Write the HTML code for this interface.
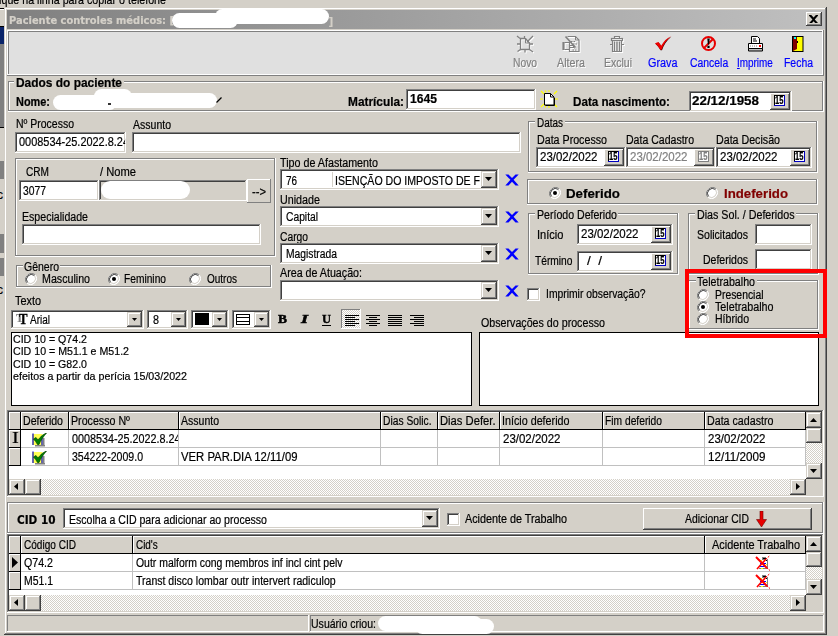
<!DOCTYPE html>
<html lang="pt-BR">
<head>
<meta charset="utf-8">
<title>Paciente controles médicos</title>
<style>
html,body{margin:0;padding:0;}
body{width:838px;height:636px;overflow:hidden;background:#d4d0c8;font-family:"Liberation Sans",sans-serif;font-size:12px;color:#000;}
#root{position:relative;width:838px;height:636px;overflow:hidden;background:#d4d0c8;}
#root div,#root span.t,#root svg{position:absolute;box-sizing:border-box;}
span.t{white-space:pre;transform-origin:0 0;display:block;-webkit-text-stroke:0.2px;}
.sunk{background:#fff;box-shadow:inset -1px -1px 0 #fff,inset 1px 1px 0 #808080,inset -2px -2px 0 #d4d0c8,inset 2px 2px 0 #404040;}
.sunkg{background:#d4d0c8;box-shadow:inset -1px -1px 0 #fff,inset 1px 1px 0 #808080,inset -2px -2px 0 #d4d0c8,inset 2px 2px 0 #404040;}
.btn{background:#d4d0c8;box-shadow:inset -1px -1px 0 #404040,inset 1px 1px 0 #fff,inset -2px -2px 0 #808080,inset 2px 2px 0 #d4d0c8;}
.sbtn{background:#d4d0c8;box-shadow:inset -1px -1px 0 #404040,inset 1px 1px 0 #d4d0c8,inset -2px -2px 0 #808080,inset 2px 2px 0 #fff;}
.frame{background:#d4d0c8;box-shadow:inset -1px -1px 0 #404040,inset 1px 1px 0 #d4d0c8,inset -2px -2px 0 #808080,inset 2px 2px 0 #fff;}
.etch{box-shadow:inset -1px -1px 0 #fff,inset 1px 1px 0 #808080,inset -2px -2px 0 #808080,inset 2px 2px 0 #fff;}
.low1{box-shadow:inset -1px -1px 0 #fff,inset 1px 1px 0 #808080;}
.rai1{box-shadow:inset -1px -1px 0 #808080,inset 1px 1px 0 #fff;}
.track{background:repeating-conic-gradient(#fff 0% 25%,#d4d0c8 0% 50%) 0 0/2px 2px;}
.hd{background:#d4d0c8;box-shadow:inset -1px -1px 0 #000,inset 1px 1px 0 #fff;}
.blob{background:#fff;border-radius:8px;}

</style>
</head>
<body>
<div id="root">
<span id="t0" class="t" style="left:-11.00px;top:-7.3px;font-size:12px;line-height:14px;transform:scaleX(0.8903);">Clique na linha para copiar o telefone</span>
<div class="" style="left:0px;top:8px;width:4px;height:1px;background:#000;"></div>
<div class="" style="left:0px;top:9px;width:4px;height:1px;background:#fff;"></div>
<div class="" style="left:0px;top:26px;width:4px;height:1px;background:#000;"></div>
<div class="" style="left:0px;top:27px;width:4px;height:17px;background:#0a246a;"></div>
<div class="" style="left:0px;top:44px;width:4px;height:83px;background:#808080;"></div>
<div class="" style="left:0px;top:127px;width:4px;height:1px;background:#000;"></div>
<div class="" style="left:0px;top:161px;width:4px;height:18px;background:#808080;"></div>
<div class="" style="left:0px;top:234px;width:4px;height:19px;background:#808080;"></div>
<div class="" style="left:0px;top:258px;width:4px;height:18px;background:#808080;"></div>
<span id="t1" class="t" style="left:-3.00px;top:188px;font-size:12px;line-height:14px;">c</span>
<span id="t2" class="t" style="left:-3.00px;top:283px;font-size:12px;line-height:14px;">c</span>
<div class="frame" style="left:4px;top:7px;width:823px;height:628px;"></div>
<div class="" style="left:7px;top:10px;width:818px;height:19px;background:linear-gradient(90deg,#808080 0%,#c0c0c0 100%);"></div>
<span id="t3" class="t" style="left:9.00px;top:15px;font-size:11px;line-height:12px;font-weight:bold;color:#d4d0c8;font-family:'DejaVu Sans','Liberation Sans',sans-serif;transform:scaleX(0.8990);">Paciente controles médicos: [</span>
<div class="blob" style="left:172px;top:13px;width:66px;height:15px;"></div>
<div class="blob" style="left:215px;top:9px;width:114px;height:15px;"></div>
<span id="t4" class="t" style="left:329.00px;top:15px;font-size:11px;line-height:12px;font-weight:bold;color:#d4d0c8;transform:scaleX(1.0894);">]</span>
<div class="btn" style="left:806px;top:12px;width:16px;height:14px;"></div>
<svg style="left:808.6px;top:14.6px" width="9.2" height="8.8" viewBox="0 0 8 7" preserveAspectRatio="none"><path d="M0 0h2l2 2 2-2h2v0.500L5 3.500 8 6.500V7H6L4 5 2 7H0V6.500L3 3.500 0 0.500z" fill="#000"/></svg>
<div class="" style="left:7px;top:30px;width:817px;height:46px;background:#e0e0e0;box-shadow:inset -1px -1px 0 #808080,inset 1px 1px 0 #fff,inset -2px -2px 0 #fff,inset 2px 2px 0 #808080;"></div>
<span id="t5" class="t" style="left:513.00px;top:56px;font-size:12px;line-height:14px;color:#808080;text-shadow:1px 1px 0 #fff;transform:scaleX(0.8567);">Novo</span>
<span id="t6" class="t" style="left:556.50px;top:56px;font-size:12px;line-height:14px;color:#808080;text-shadow:1px 1px 0 #fff;transform:scaleX(0.8929);">Altera</span>
<span id="t7" class="t" style="left:603.50px;top:56px;font-size:12px;line-height:14px;color:#808080;text-shadow:1px 1px 0 #fff;transform:scaleX(0.8746);">Exclui</span>
<span id="t8" class="t" style="left:648.25px;top:56px;font-size:12px;line-height:14px;color:#0000ff;transform:scaleX(0.9025);">Grava</span>
<span id="t9" class="t" style="left:689.50px;top:56px;font-size:12px;line-height:14px;color:#0000ff;transform:scaleX(0.8676);">Cancela</span>
<span id="t10" class="t" style="left:737.40px;top:56px;font-size:12px;line-height:14px;color:#0000ff;transform:scaleX(0.8257);"><u>I</u>mprime</span>
<span id="t11" class="t" style="left:783.60px;top:56px;font-size:12px;line-height:14px;color:#0000ff;transform:scaleX(0.8693);">Fecha</span>
<svg style="left:516px;top:35px;filter:drop-shadow(1px 1px 0 #fff);" width="18" height="18" viewBox="0 0 18 18" fill="none" stroke="#808080" stroke-width="1.300"><path d="M4.500 3.500h5l4 4.500v6.500h-9z"/><path d="M9.500 3.500v4.500h4" stroke-width="1"/><path d="M1 1l3 2.500M17 1l-6 6M1 9h3M14 9h3M1.500 16.500l3-2M13.500 14.500l3.500 2.500M8.500 1v2M9 15v2.500"/></svg>
<svg style="left:562px;top:35px;filter:drop-shadow(1px 1px 0 #fff);" width="18" height="18" viewBox="0 0 18 18" fill="none" stroke="#808080" stroke-width="1.200"><path d="M5.500 1.500h8l3.500 3.500v11.500h-9.500v-3"/><path d="M13.500 1.500v3.500h3.500" stroke-width="1"/><path d="M1.500 7v8" stroke-width="2.200"/><path d="M2.500 7.500h5v2.500M2.500 14.500h5v-2M7.500 10.500h4v2h-4z"/><path d="M3.500 1.500l10 11" stroke-width="1.800"/><path d="M9 6.500h5M11 9h4M12 13h3M10.500 15h4" stroke-width="1" stroke-dasharray="1.500 1"/></svg>
<svg style="left:609px;top:35px;filter:drop-shadow(1px 1px 0 #fff);" width="16" height="18" viewBox="0 0 16 18" fill="none" stroke="#808080" stroke-width="1.200"><path d="M5.500 3v-1.500h5V3"/><rect x="2.500" y="3.500" width="11" height="2"/><path d="M3.500 6v10.500h9V6"/><path d="M5.500 6.500v9.500M8 6.500v9.500M10.500 6.500v9.500" stroke-width="1.400"/><path d="M1 9.500h2M13 9.500h2" stroke-width="1"/></svg>
<svg style="left:654px;top:36px" width="18" height="15" viewBox="0 0 18 15"><path d="M1.300 7.800l3.400-1.300 2.800 3.800C10 6 13 2.500 17.300 0.700 12.500 4.500 9.800 9 8 14.300H6.500C5.200 11.800 3.500 9.600 1.300 7.800z" fill="#400000"/><path d="M1 7.300l3.400-1.300 2.800 3.800C9.700 5.500 12.700 2 17 0.200 12.200 4 9.500 8.500 7.500 13.800H6.200C4.900 11.300 3.200 9.100 1 7.300z" fill="#f00000"/></svg>
<svg style="left:700px;top:35px" width="17" height="17" viewBox="0 0 17 17"><circle cx="8.500" cy="8.500" r="6.500" fill="none" stroke="#e80000" stroke-width="2"/><path d="M4 13L13 4" stroke="#e80000" stroke-width="2"/><path d="M7.300 3.500h2.400l-.6 6h-1.200zM7.400 10.700h2.200v2.200H7.400z" fill="#000"/></svg>
<svg style="left:747px;top:36px" width="17" height="16" viewBox="0 0 17 16"><path d="M4.500 0.500h6l2 2v5h-8z" fill="#fff" stroke="#000"/><path d="M6 3h3M6 5h4" stroke="#000"/><path d="M1.500 7.500h14v5h-14z" fill="#fff" stroke="#000"/><path d="M1.500 12.500h14v2.500h-14z" fill="#c0c0c0" stroke="#000"/><path d="M3 10h8" stroke="#808080" stroke-dasharray="1 1"/><rect x="12" y="9" width="2" height="2" fill="#f00"/></svg>
<svg style="left:792px;top:36px" width="12" height="16" viewBox="0 0 12 16"><rect x="0.500" y="0.500" width="10.500" height="15" fill="#ffff00" stroke="#000"/><path d="M1 1h4v12l-4 2z" fill="#800000"/><rect x="2" y="1" width="2" height="2" fill="#00ffff"/><rect x="5" y="5" width="1" height="2" fill="#000"/></svg>
<div class="etch" style="left:8px;top:81px;width:816px;height:31px;"></div>
<div class="" style="left:14px;top:77px;width:110px;height:10px;background:#d4d0c8;"></div>
<span id="t12" class="t" style="left:16.00px;top:76px;font-size:12px;line-height:14px;font-weight:bold;transform:scaleX(0.9936);">Dados do paciente</span>
<span id="t13" class="t" style="left:16.00px;top:95px;font-size:12px;line-height:14px;font-weight:bold;transform:scaleX(0.9105);">Nome:</span>
<div class="blob" style="left:53px;top:95px;width:64px;height:15px;"></div>
<div class="blob" style="left:94px;top:89px;width:38px;height:15px;"></div>
<div class="blob" style="left:108px;top:93px;width:109px;height:15px;"></div>
<div class="" style="left:108px;top:103px;width:3px;height:2px;background:#333;"></div>
<svg style="left:215px;top:95px" width="9" height="10" viewBox="0 0 9 10"><path d="M1.500 7.500L6.500 2.500" stroke="#000" stroke-width="1.300"/></svg>
<span id="t14" class="t" style="left:348.00px;top:95px;font-size:12px;line-height:14px;font-weight:bold;transform:scaleX(0.9879);">Matrícula:</span>
<div class="sunk" style="left:406px;top:89px;width:130px;height:21px;"></div>
<span id="t15" class="t" style="left:410.00px;top:92px;font-size:12px;line-height:14px;font-weight:bold;transform:scaleX(1.0111);">1645</span>
<svg style="left:540px;top:90px" width="18" height="18" viewBox="0 0 18 18"><path d="M1 1l3 3M17 1l-3 3M1 17l3-3M17 17l-3-3M0 9h3M15 9h3M9 0v2M9 16v2M5 0.500l1 2M5 17.500l1-2" stroke="#ffff00" stroke-width="1.200"/><path d="M4.500 3.500h6l3.500 3.500v8h-9.500z" fill="#fff" stroke="#000"/><path d="M10.500 3.500v3.500h3.500" fill="none" stroke="#000"/><path d="M14.500 8v7.500h-9" fill="none" stroke="#000"/></svg>
<span id="t16" class="t" style="left:573.00px;top:95px;font-size:12px;line-height:14px;font-weight:bold;transform:scaleX(0.9697);">Data nascimento:</span>
<div class="sunk" style="left:689px;top:91px;width:103px;height:21px;"></div>
<span id="t17" class="t" style="left:692.00px;top:94px;font-size:12px;line-height:14px;font-weight:bold;transform:scaleX(1.1155);">22/12/1958</span>
<div class="btn" style="left:770px;top:93px;width:20px;height:17px;"></div>
<div class="" style="left:774px;top:95px;width:11px;height:11px;background:#fff;box-shadow:inset -1px -1px 0 #0000c0,inset 1px 1px 0 #000;"></div>
<span id="t18" class="t" style="left:775.00px;top:95.3px;font-size:10px;line-height:11px;font-weight:bold;color:#000;transform:scaleX(0.7551);">15</span>
<span id="t19" class="t" style="left:16.00px;top:117px;font-size:12px;line-height:14px;transform:scaleX(0.8734);">Nº Processo</span>
<span id="t20" class="t" style="left:133.00px;top:118px;font-size:12px;line-height:14px;transform:scaleX(0.8764);">Assunto</span>
<div class="sunk" style="left:15px;top:132px;width:111px;height:21px;"></div>
<div class="" style="left:17px;top:134px;width:107px;height:16px;overflow:hidden;background:#fff;"></div>
<span id="t21" class="t" style="left:19.00px;top:135px;font-size:12px;line-height:14px;transform:scaleX(0.9107);clip-path:inset(0 3.5% 0 0);">0008534-25.2022.8.24</span>
<div class="sunk" style="left:132px;top:132px;width:389px;height:21px;"></div>
<div class="etch" style="left:15px;top:158px;width:261px;height:99px;"></div>
<span id="t22" class="t" style="left:26.00px;top:165px;font-size:12px;line-height:14px;transform:scaleX(0.8416);">CRM</span>
<span id="t23" class="t" style="left:100.00px;top:165px;font-size:12px;line-height:14px;transform:scaleX(0.9305);">/ Nome</span>
<div class="sunk" style="left:19px;top:180px;width:80px;height:21px;"></div>
<span id="t24" class="t" style="left:23.00px;top:183.5px;font-size:12px;line-height:14px;transform:scaleX(0.8613);">3077</span>
<div class="sunkg" style="left:99px;top:180px;width:148px;height:21px;"></div>
<div class="blob" style="left:101px;top:181px;width:89px;height:18px;border-radius:9px;"></div>
<div class="rai1" style="left:247px;top:179px;width:24px;height:24px;"></div>
<span id="t25" class="t" style="left:251.50px;top:185px;font-size:12px;line-height:14px;transform:scaleX(0.9333);">--&gt;</span>
<span id="t26" class="t" style="left:22.00px;top:210px;font-size:12px;line-height:14px;transform:scaleX(0.8833);">Especialidade</span>
<div class="sunk" style="left:22px;top:224px;width:239px;height:21px;"></div>
<div class="etch" style="left:16px;top:265px;width:256px;height:23px;"></div>
<div class="" style="left:23px;top:261px;width:37px;height:10px;background:#d4d0c8;"></div>
<span id="t27" class="t" style="left:24.00px;top:260px;font-size:12px;line-height:14px;transform:scaleX(0.8743);">Gênero</span>
<svg style="left:25px;top:273px" width="12" height="12" viewBox="0 0 12 12"><circle cx="6" cy="6" r="5.500" fill="#fff"/><path d="M1.800 10.200A6 6 0 0 1 10.200 1.800" fill="none" stroke="#808080" stroke-width="1"/><path d="M2.500 9.500A5 5 0 0 1 9.500 2.500" fill="none" stroke="#404040" stroke-width="1"/><path d="M10.200 1.800A6 6 0 0 1 1.800 10.200" fill="none" stroke="#fff" stroke-width="1"/><path d="M9.500 2.500A5 5 0 0 1 2.500 9.500" fill="none" stroke="#d4d0c8" stroke-width="1"/></svg>
<span id="t28" class="t" style="left:42.00px;top:272px;font-size:12px;line-height:14px;transform:scaleX(0.8884);">Masculino</span>
<svg style="left:108px;top:273px" width="12" height="12" viewBox="0 0 12 12"><circle cx="6" cy="6" r="5.500" fill="#fff"/><path d="M1.800 10.200A6 6 0 0 1 10.200 1.800" fill="none" stroke="#808080" stroke-width="1"/><path d="M2.500 9.500A5 5 0 0 1 9.500 2.500" fill="none" stroke="#404040" stroke-width="1"/><path d="M10.200 1.800A6 6 0 0 1 1.800 10.200" fill="none" stroke="#fff" stroke-width="1"/><path d="M9.500 2.500A5 5 0 0 1 2.500 9.500" fill="none" stroke="#d4d0c8" stroke-width="1"/><circle cx="6" cy="6" r="2" fill="#000"/></svg>
<span id="t29" class="t" style="left:124.00px;top:272px;font-size:12px;line-height:14px;transform:scaleX(0.8509);">Feminino</span>
<svg style="left:189px;top:273px" width="12" height="12" viewBox="0 0 12 12"><circle cx="6" cy="6" r="5.500" fill="#fff"/><path d="M1.800 10.200A6 6 0 0 1 10.200 1.800" fill="none" stroke="#808080" stroke-width="1"/><path d="M2.500 9.500A5 5 0 0 1 9.500 2.500" fill="none" stroke="#404040" stroke-width="1"/><path d="M10.200 1.800A6 6 0 0 1 1.800 10.200" fill="none" stroke="#fff" stroke-width="1"/><path d="M9.500 2.500A5 5 0 0 1 2.500 9.500" fill="none" stroke="#d4d0c8" stroke-width="1"/></svg>
<span id="t30" class="t" style="left:207.00px;top:272px;font-size:12px;line-height:14px;transform:scaleX(0.8330);">Outros</span>
<span id="t31" class="t" style="left:15.00px;top:294px;font-size:12px;line-height:14px;transform:scaleX(0.9063);">Texto</span>
<span id="t32" class="t" style="left:280.00px;top:156px;font-size:12px;line-height:14px;transform:scaleX(0.8940);">Tipo de Afastamento</span>
<div class="sunk" style="left:280px;top:169px;width:219px;height:21px;"></div>
<div class="" style="left:332px;top:172px;width:1px;height:15px;background:#d4d0c8;"></div>
<span id="t33" class="t" style="left:286.00px;top:173.5px;font-size:12px;line-height:14px;transform:scaleX(0.8234);">76</span>
<span id="t34" class="t" style="left:335.00px;top:173.5px;font-size:12px;line-height:14px;transform:scaleX(0.8816);">ISENÇÃO DO IMPOSTO DE F</span>
<div class="sbtn" style="left:481px;top:171px;width:16px;height:17px;"></div>
<svg style="left:485px;top:177px" width="7" height="4" viewBox="0 0 7 4"><path d="M0 0h7L3.500 4z" fill="#000"/></svg>
<svg style="left:504.6px;top:174.2px" width="14" height="12" viewBox="0 0 14 12"><path d="M0.300 0.500h3.200L7 3.900 10.500 0.500h3.200L8.600 5.800 13.700 11.500h-3.200L7 7.700 3.500 11.500H0.300L5.400 5.800z" fill="#0000ff"/></svg>
<span id="t35" class="t" style="left:280.00px;top:193px;font-size:12px;line-height:14px;transform:scaleX(0.8948);">Unidade</span>
<div class="sunk" style="left:280px;top:206px;width:219px;height:21px;"></div>
<span id="t36" class="t" style="left:286.00px;top:210px;font-size:12px;line-height:14px;transform:scaleX(0.8565);">Capital</span>
<div class="sbtn" style="left:481px;top:208px;width:16px;height:17px;"></div>
<svg style="left:485px;top:214px" width="7" height="4" viewBox="0 0 7 4"><path d="M0 0h7L3.500 4z" fill="#000"/></svg>
<svg style="left:504.6px;top:211.2px" width="14" height="12" viewBox="0 0 14 12"><path d="M0.300 0.500h3.200L7 3.900 10.500 0.500h3.200L8.600 5.800 13.700 11.500h-3.200L7 7.700 3.500 11.500H0.300L5.400 5.800z" fill="#0000ff"/></svg>
<span id="t37" class="t" style="left:280.00px;top:229.5px;font-size:12px;line-height:14px;transform:scaleX(0.8566);">Cargo</span>
<div class="sunk" style="left:280px;top:243px;width:219px;height:21px;"></div>
<span id="t38" class="t" style="left:286.00px;top:247px;font-size:12px;line-height:14px;transform:scaleX(0.8589);">Magistrada</span>
<div class="sbtn" style="left:481px;top:245px;width:16px;height:17px;"></div>
<svg style="left:485px;top:251px" width="7" height="4" viewBox="0 0 7 4"><path d="M0 0h7L3.500 4z" fill="#000"/></svg>
<svg style="left:504.6px;top:248.2px" width="14" height="12" viewBox="0 0 14 12"><path d="M0.300 0.500h3.200L7 3.900 10.500 0.500h3.200L8.600 5.800 13.700 11.500h-3.200L7 7.700 3.500 11.500H0.300L5.400 5.800z" fill="#0000ff"/></svg>
<span id="t39" class="t" style="left:279.50px;top:266px;font-size:12px;line-height:14px;transform:scaleX(0.8905);">Area de Atuação:</span>
<div class="sunk" style="left:280px;top:280px;width:219px;height:21px;"></div>
<div class="sbtn" style="left:481px;top:282px;width:16px;height:17px;"></div>
<svg style="left:485px;top:288px" width="7" height="4" viewBox="0 0 7 4"><path d="M0 0h7L3.500 4z" fill="#000"/></svg>
<svg style="left:504.6px;top:285.2px" width="14" height="12" viewBox="0 0 14 12"><path d="M0.300 0.500h3.200L7 3.900 10.500 0.500h3.200L8.600 5.800 13.700 11.500h-3.200L7 7.700 3.500 11.500H0.300L5.400 5.800z" fill="#0000ff"/></svg>
<div class="etch" style="left:528px;top:121px;width:290px;height:52px;"></div>
<div class="" style="left:535px;top:117px;width:30px;height:10px;background:#d4d0c8;"></div>
<span id="t40" class="t" style="left:537.00px;top:116px;font-size:12px;line-height:14px;transform:scaleX(0.8291);">Datas</span>
<span id="t41" class="t" style="left:537.00px;top:133px;font-size:12px;line-height:14px;transform:scaleX(0.8894);">Data Processo</span>
<span id="t42" class="t" style="left:626.00px;top:133px;font-size:12px;line-height:14px;transform:scaleX(0.8788);">Data Cadastro</span>
<span id="t43" class="t" style="left:716.00px;top:133px;font-size:12px;line-height:14px;transform:scaleX(0.8883);">Data Decisão</span>
<div class="sunk" style="left:536px;top:147px;width:90px;height:21px;"></div>
<span id="t44" class="t" style="left:540.00px;top:150px;font-size:12px;line-height:14px;transform:scaleX(0.9573);">23/02/2022</span>
<div class="btn" style="left:604px;top:149px;width:20px;height:17px;"></div>
<div class="" style="left:608px;top:151px;width:11px;height:11px;background:#fff;box-shadow:inset -1px -1px 0 #0000c0,inset 1px 1px 0 #000;"></div>
<span id="t45" class="t" style="left:609.00px;top:151.3px;font-size:10px;line-height:11px;font-weight:bold;color:#000;transform:scaleX(0.7551);">15</span>
<div class="sunk" style="left:626px;top:147px;width:90px;height:21px;"></div>
<span id="t46" class="t" style="left:630.00px;top:150px;font-size:12px;line-height:14px;color:#808080;transform:scaleX(0.9573);">23/02/2022</span>
<div class="btn" style="left:694px;top:149px;width:20px;height:17px;"></div>
<div class="" style="left:698px;top:151px;width:11px;height:11px;background:#fff;box-shadow:inset -1px -1px 0 #808080,inset 1px 1px 0 #808080;"></div>
<span id="t47" class="t" style="left:699.00px;top:151.3px;font-size:10px;line-height:11px;font-weight:bold;color:#808080;transform:scaleX(0.7551);">15</span>
<div class="sunk" style="left:716px;top:147px;width:96px;height:21px;"></div>
<span id="t48" class="t" style="left:720.00px;top:150px;font-size:12px;line-height:14px;transform:scaleX(0.9573);">23/02/2022</span>
<div class="btn" style="left:790px;top:149px;width:20px;height:17px;"></div>
<div class="" style="left:794px;top:151px;width:11px;height:11px;background:#fff;box-shadow:inset -1px -1px 0 #0000c0,inset 1px 1px 0 #000;"></div>
<span id="t49" class="t" style="left:795.00px;top:151.3px;font-size:10px;line-height:11px;font-weight:bold;color:#000;transform:scaleX(0.7551);">15</span>
<div class="etch" style="left:527px;top:179px;width:291px;height:26px;"></div>
<svg style="left:549px;top:187px" width="12" height="12" viewBox="0 0 12 12"><circle cx="6" cy="6" r="5.500" fill="#fff"/><path d="M1.800 10.200A6 6 0 0 1 10.200 1.800" fill="none" stroke="#808080" stroke-width="1"/><path d="M2.500 9.500A5 5 0 0 1 9.500 2.500" fill="none" stroke="#404040" stroke-width="1"/><path d="M10.200 1.800A6 6 0 0 1 1.800 10.200" fill="none" stroke="#fff" stroke-width="1"/><path d="M9.500 2.500A5 5 0 0 1 2.500 9.500" fill="none" stroke="#d4d0c8" stroke-width="1"/><circle cx="6" cy="6" r="2" fill="#000"/></svg>
<span id="t50" class="t" style="left:566.00px;top:186px;font-size:13.5px;line-height:15px;font-weight:bold;transform:scaleX(0.9860);">Deferido</span>
<svg style="left:706px;top:187px" width="12" height="12" viewBox="0 0 12 12"><circle cx="6" cy="6" r="5.500" fill="#fff"/><path d="M1.800 10.200A6 6 0 0 1 10.200 1.800" fill="none" stroke="#808080" stroke-width="1"/><path d="M2.500 9.500A5 5 0 0 1 9.500 2.500" fill="none" stroke="#404040" stroke-width="1"/><path d="M10.200 1.800A6 6 0 0 1 1.800 10.200" fill="none" stroke="#fff" stroke-width="1"/><path d="M9.500 2.500A5 5 0 0 1 2.500 9.500" fill="none" stroke="#d4d0c8" stroke-width="1"/></svg>
<span id="t51" class="t" style="left:724.00px;top:186px;font-size:13.5px;line-height:15px;font-weight:bold;color:#800000;transform:scaleX(0.9806);">Indeferido</span>
<div class="etch" style="left:528px;top:213px;width:151px;height:62px;"></div>
<div class="" style="left:535px;top:209px;width:83px;height:10px;background:#d4d0c8;"></div>
<span id="t52" class="t" style="left:537.00px;top:208px;font-size:12px;line-height:14px;transform:scaleX(0.8817);">Período Deferido</span>
<span id="t53" class="t" style="left:536.50px;top:228px;font-size:12px;line-height:14px;transform:scaleX(0.9237);">Início</span>
<div class="sunk" style="left:577px;top:224px;width:96px;height:21px;"></div>
<span id="t54" class="t" style="left:581.00px;top:227px;font-size:12px;line-height:14px;transform:scaleX(0.9573);">23/02/2022</span>
<div class="btn" style="left:651px;top:226px;width:20px;height:17px;"></div>
<div class="" style="left:655px;top:228px;width:11px;height:11px;background:#fff;box-shadow:inset -1px -1px 0 #0000c0,inset 1px 1px 0 #000;"></div>
<span id="t55" class="t" style="left:656.00px;top:228.3px;font-size:10px;line-height:11px;font-weight:bold;color:#000;transform:scaleX(0.7551);">15</span>
<span id="t56" class="t" style="left:535.00px;top:254px;font-size:12px;line-height:14px;transform:scaleX(0.8520);">Término</span>
<div class="sunk" style="left:577px;top:251px;width:96px;height:21px;"></div>
<span id="t57" class="t" style="left:587.00px;top:254px;font-size:12px;line-height:14px;transform:scaleX(1.1241);">/  /</span>
<div class="btn" style="left:651px;top:253px;width:20px;height:17px;"></div>
<div class="" style="left:655px;top:255px;width:11px;height:11px;background:#fff;box-shadow:inset -1px -1px 0 #0000c0,inset 1px 1px 0 #000;"></div>
<span id="t58" class="t" style="left:656.00px;top:255.3px;font-size:10px;line-height:11px;font-weight:bold;color:#000;transform:scaleX(0.7551);">15</span>
<div class="etch" style="left:688px;top:213px;width:131px;height:62px;"></div>
<div class="" style="left:695px;top:209px;width:101px;height:10px;background:#d4d0c8;"></div>
<span id="t59" class="t" style="left:696.50px;top:208px;font-size:12px;line-height:14px;transform:scaleX(0.8913);">Dias Sol. / Deferidos</span>
<span id="t60" class="t" style="left:696.50px;top:228px;font-size:12px;line-height:14px;transform:scaleX(0.8788);">Solicitados</span>
<div class="sunk" style="left:755px;top:224px;width:57px;height:21px;"></div>
<span id="t61" class="t" style="left:702.50px;top:253px;font-size:12px;line-height:14px;transform:scaleX(0.8762);">Deferidos</span>
<div class="sunk" style="left:755px;top:249px;width:57px;height:21px;"></div>
<div class="etch" style="left:688px;top:280px;width:131px;height:50px;background:#d4d0c8;"></div>
<div class="" style="left:696px;top:276px;width:61px;height:10px;background:#d4d0c8;"></div>
<span id="t62" class="t" style="left:697.00px;top:275px;font-size:12px;line-height:14px;transform:scaleX(0.8870);">Teletrabalho</span>
<svg style="left:697px;top:289px" width="12" height="12" viewBox="0 0 12 12"><circle cx="6" cy="6" r="5.500" fill="#fff"/><path d="M1.800 10.200A6 6 0 0 1 10.200 1.800" fill="none" stroke="#808080" stroke-width="1"/><path d="M2.500 9.500A5 5 0 0 1 9.500 2.500" fill="none" stroke="#404040" stroke-width="1"/><path d="M10.200 1.800A6 6 0 0 1 1.800 10.200" fill="none" stroke="#fff" stroke-width="1"/><path d="M9.500 2.500A5 5 0 0 1 2.500 9.500" fill="none" stroke="#d4d0c8" stroke-width="1"/></svg>
<span id="t63" class="t" style="left:714.50px;top:288px;font-size:12px;line-height:14px;transform:scaleX(0.8656);">Presencial</span>
<svg style="left:697px;top:301px" width="12" height="12" viewBox="0 0 12 12"><circle cx="6" cy="6" r="5.500" fill="#fff"/><path d="M1.800 10.200A6 6 0 0 1 10.200 1.800" fill="none" stroke="#808080" stroke-width="1"/><path d="M2.500 9.500A5 5 0 0 1 9.500 2.500" fill="none" stroke="#404040" stroke-width="1"/><path d="M10.200 1.800A6 6 0 0 1 1.800 10.200" fill="none" stroke="#fff" stroke-width="1"/><path d="M9.500 2.500A5 5 0 0 1 2.500 9.500" fill="none" stroke="#d4d0c8" stroke-width="1"/><circle cx="6" cy="6" r="2" fill="#000"/></svg>
<span id="t64" class="t" style="left:714.50px;top:300px;font-size:12px;line-height:14px;transform:scaleX(0.8946);">Teletrabalho</span>
<svg style="left:697px;top:313px" width="12" height="12" viewBox="0 0 12 12"><circle cx="6" cy="6" r="5.500" fill="#fff"/><path d="M1.800 10.200A6 6 0 0 1 10.200 1.800" fill="none" stroke="#808080" stroke-width="1"/><path d="M2.500 9.500A5 5 0 0 1 9.500 2.500" fill="none" stroke="#404040" stroke-width="1"/><path d="M10.200 1.800A6 6 0 0 1 1.800 10.200" fill="none" stroke="#fff" stroke-width="1"/><path d="M9.500 2.500A5 5 0 0 1 2.500 9.500" fill="none" stroke="#d4d0c8" stroke-width="1"/></svg>
<span id="t65" class="t" style="left:714.50px;top:312px;font-size:12px;line-height:14px;transform:scaleX(0.8788);">Híbrido</span>
<div class="sunk" style="left:527px;top:288px;width:13px;height:13px;"></div>
<span id="t66" class="t" style="left:545.50px;top:287px;font-size:12px;line-height:14px;transform:scaleX(0.8624);">Imprimir observação?</span>
<span id="t67" class="t" style="left:480.50px;top:316px;font-size:12px;line-height:14px;transform:scaleX(0.8895);">Observações do processo</span>
<div class="sunk" style="left:11px;top:310px;width:133px;height:19px;"></div>
<div class="sbtn" style="left:127px;top:312px;width:15px;height:15px;"></div>
<svg style="left:132px;top:318px" width="5" height="3" viewBox="0 0 5 3"><path d="M0 0h5L2.500 3z" fill="#000"/></svg>
<span id="t68" class="t" style="left:16.00px;top:310.5px;font-size:12px;line-height:14px;font-weight:bold;color:#808080;font-family:'Liberation Serif',serif;transform:scaleX(0.9357);">T</span>
<span id="t69" class="t" style="left:18.50px;top:311.8px;font-size:14px;line-height:16px;font-weight:bold;font-family:'Liberation Serif',serif;transform:scaleX(0.9097);-webkit-text-stroke:0.3px #000;">T</span>
<span id="t70" class="t" style="left:30.00px;top:313px;font-size:12px;line-height:14px;transform:scaleX(0.8328);">Arial</span>
<div class="sunk" style="left:147px;top:310px;width:41px;height:19px;"></div>
<div class="sbtn" style="left:171px;top:312px;width:15px;height:15px;"></div>
<svg style="left:176px;top:318px" width="5" height="3" viewBox="0 0 5 3"><path d="M0 0h5L2.500 3z" fill="#000"/></svg>
<span id="t71" class="t" style="left:152.50px;top:313px;font-size:12px;line-height:14px;transform:scaleX(0.8972);">8</span>
<div class="sunk" style="left:191px;top:310px;width:38px;height:19px;"></div>
<div class="sbtn" style="left:212px;top:312px;width:15px;height:15px;"></div>
<svg style="left:217px;top:318px" width="5" height="3" viewBox="0 0 5 3"><path d="M0 0h5L2.500 3z" fill="#000"/></svg>
<div class="" style="left:195px;top:313px;width:14px;height:12px;background:#000;"></div>
<div class="sunk" style="left:232px;top:310px;width:39px;height:19px;"></div>
<div class="sbtn" style="left:254px;top:312px;width:15px;height:15px;"></div>
<svg style="left:259px;top:318px" width="5" height="3" viewBox="0 0 5 3"><path d="M0 0h5L2.500 3z" fill="#000"/></svg>
<svg style="left:236px;top:314px" width="14" height="11" viewBox="0 0 14 11"><rect x="0.500" y="0.500" width="13" height="10" fill="#fff" stroke="#000"/><path d="M0 3.500h14M0 7.500h14" stroke="#000"/></svg>
<span id="t72" class="t" style="left:278.00px;top:310.7px;font-size:13px;line-height:15px;font-weight:bold;font-family:'Liberation Serif',serif;transform:scaleX(1.0378);-webkit-text-stroke:0.5px #000;">B</span>
<span id="t73" class="t" style="left:300.50px;top:310.7px;font-size:13px;line-height:15px;font-weight:bold;font-style:italic;font-family:'Liberation Serif',serif;transform:scaleX(1.3827);-webkit-text-stroke:0.5px #000;">I</span>
<span id="t74" class="t" style="left:321.50px;top:310.7px;font-size:13px;line-height:15px;font-weight:bold;font-family:'Liberation Serif',serif;transform:scaleX(0.9584);-webkit-text-stroke:0.4px #000;">U</span>
<div class="" style="left:322px;top:325px;width:9px;height:1px;background:#000;"></div>
<div class="track" style="left:341px;top:309px;width:20px;height:20px;box-shadow:inset -1px -1px 0 #fff,inset 1px 1px 0 #808080;"></div>
<svg style="left:345px;top:315px" width="14" height="12" viewBox="0 0 14 12"><path d="M0 0.5h14M0 2.5h10M0 4.5h14M0 6.5h10M0 8.5h14M0 10.5h10" stroke="#000" fill="none"/></svg>
<svg style="left:366px;top:315px" width="14" height="12" viewBox="0 0 14 12"><path d="M0 0.5h14M3 2.5h8M0 4.5h14M3 6.5h8M0 8.5h14M3 10.5h8" stroke="#000" fill="none"/></svg>
<svg style="left:388px;top:315px" width="14" height="12" viewBox="0 0 14 12"><path d="M0 0.5h14M0 2.5h14M0 4.5h14M0 6.5h14M0 8.5h14M0 10.5h14" stroke="#000" fill="none"/></svg>
<svg style="left:410px;top:315px" width="14" height="12" viewBox="0 0 14 12"><path d="M0 0.5h14M4 2.5h10M0 4.5h14M4 6.5h10M0 8.5h14M4 10.5h10" stroke="#000" fill="none"/></svg>
<div class="" style="left:11px;top:332px;width:461px;height:74px;background:#fff;border:1px solid #000;"></div>
<span id="t75" class="t" style="left:13.00px;top:333px;font-size:11px;line-height:12px;transform:scaleX(0.9642);">CID 10 = Q74.2</span>
<span id="t76" class="t" style="left:13.00px;top:345px;font-size:11px;line-height:12px;transform:scaleX(0.9654);">CID 10 = M51.1 e M51.2</span>
<span id="t77" class="t" style="left:13.00px;top:357.5px;font-size:11px;line-height:12px;transform:scaleX(0.9642);">CID 10 = G82.0</span>
<span id="t78" class="t" style="left:13.00px;top:370px;font-size:11px;line-height:12px;transform:scaleX(0.9710);">efeitos a partir da perícia 15/03/2022</span>
<div class="" style="left:479px;top:332px;width:340px;height:74px;background:#fff;border:1px solid #000;"></div>
<div class="sunk" style="left:7px;top:410px;width:817px;height:87px;"></div>
<div class="hd" style="left:9px;top:412px;width:12px;height:18px;"></div>
<div class="hd" style="left:21px;top:412px;width:48px;height:18px;"></div>
<span id="t79" class="t" style="left:23.40px;top:414px;font-size:12px;line-height:14px;transform:scaleX(0.8818);">Deferido</span>
<div class="hd" style="left:69px;top:412px;width:110px;height:18px;"></div>
<span id="t80" class="t" style="left:71.40px;top:414px;font-size:12px;line-height:14px;transform:scaleX(0.8885);">Processo Nº</span>
<div class="hd" style="left:179px;top:412px;width:202px;height:18px;"></div>
<span id="t81" class="t" style="left:181.40px;top:414px;font-size:12px;line-height:14px;transform:scaleX(0.8764);">Assunto</span>
<div class="hd" style="left:381px;top:412px;width:57px;height:18px;"></div>
<span id="t82" class="t" style="left:383.40px;top:414px;font-size:12px;line-height:14px;transform:scaleX(0.8556);">Dias Solic.</span>
<div class="hd" style="left:438px;top:412px;width:62px;height:18px;"></div>
<span id="t83" class="t" style="left:440.40px;top:414px;font-size:12px;line-height:14px;transform:scaleX(0.9350);">Dias Defer.</span>
<div class="hd" style="left:500px;top:412px;width:103px;height:18px;"></div>
<span id="t84" class="t" style="left:502.40px;top:414px;font-size:12px;line-height:14px;transform:scaleX(0.8953);">Início deferido</span>
<div class="hd" style="left:603px;top:412px;width:102px;height:18px;"></div>
<span id="t85" class="t" style="left:605.40px;top:414px;font-size:12px;line-height:14px;transform:scaleX(0.8545);">Fim deferido</span>
<div class="hd" style="left:705px;top:412px;width:101px;height:18px;"></div>
<span id="t86" class="t" style="left:707.40px;top:414px;font-size:12px;line-height:14px;transform:scaleX(0.8900);">Data cadastro</span>
<div class="hd" style="left:9px;top:430px;width:12px;height:18px;"></div>
<div class="" style="left:21px;top:430px;width:48px;height:18px;background:#fff;border-right:1px solid #c0c0c0;border-bottom:1px solid #c0c0c0;"></div>
<div class="" style="left:69px;top:430px;width:110px;height:18px;background:#fff;border-right:1px solid #c0c0c0;border-bottom:1px solid #c0c0c0;"></div>
<div class="" style="left:179px;top:430px;width:202px;height:18px;background:#fff;border-right:1px solid #c0c0c0;border-bottom:1px solid #c0c0c0;"></div>
<div class="" style="left:381px;top:430px;width:57px;height:18px;background:#fff;border-right:1px solid #c0c0c0;border-bottom:1px solid #c0c0c0;"></div>
<div class="" style="left:438px;top:430px;width:62px;height:18px;background:#fff;border-right:1px solid #c0c0c0;border-bottom:1px solid #c0c0c0;"></div>
<div class="" style="left:500px;top:430px;width:103px;height:18px;background:#fff;border-right:1px solid #c0c0c0;border-bottom:1px solid #c0c0c0;"></div>
<div class="" style="left:603px;top:430px;width:102px;height:18px;background:#fff;border-right:1px solid #c0c0c0;border-bottom:1px solid #c0c0c0;"></div>
<div class="" style="left:705px;top:430px;width:101px;height:18px;background:#fff;border-right:1px solid #c0c0c0;border-bottom:1px solid #c0c0c0;"></div>
<div class="hd" style="left:9px;top:448px;width:12px;height:18px;"></div>
<div class="" style="left:21px;top:448px;width:48px;height:18px;background:#fff;border-right:1px solid #c0c0c0;border-bottom:1px solid #c0c0c0;"></div>
<div class="" style="left:69px;top:448px;width:110px;height:18px;background:#fff;border-right:1px solid #c0c0c0;border-bottom:1px solid #c0c0c0;"></div>
<div class="" style="left:179px;top:448px;width:202px;height:18px;background:#fff;border-right:1px solid #c0c0c0;border-bottom:1px solid #c0c0c0;"></div>
<div class="" style="left:381px;top:448px;width:57px;height:18px;background:#fff;border-right:1px solid #c0c0c0;border-bottom:1px solid #c0c0c0;"></div>
<div class="" style="left:438px;top:448px;width:62px;height:18px;background:#fff;border-right:1px solid #c0c0c0;border-bottom:1px solid #c0c0c0;"></div>
<div class="" style="left:500px;top:448px;width:103px;height:18px;background:#fff;border-right:1px solid #c0c0c0;border-bottom:1px solid #c0c0c0;"></div>
<div class="" style="left:603px;top:448px;width:102px;height:18px;background:#fff;border-right:1px solid #c0c0c0;border-bottom:1px solid #c0c0c0;"></div>
<div class="" style="left:705px;top:448px;width:101px;height:18px;background:#fff;border-right:1px solid #c0c0c0;border-bottom:1px solid #c0c0c0;"></div>
<span id="t87" class="t" style="left:11.70px;top:429px;font-size:16.5px;line-height:18px;font-family:'Liberation Serif',serif;transform:scaleX(1.2364);">I</span>
<svg style="left:32px;top:433px" width="15" height="14" viewBox="0 0 15 14"><rect x="3" y="12" width="10" height="1.500" fill="#808080"/><rect x="11" y="5" width="1.500" height="8" fill="#808080"/><rect x="0.500" y="1" width="10" height="11" fill="#ffff55"/><path d="M1 0.500v11.500M10 3v9" fill="none" stroke="#0000c0" stroke-width="1.200"/><path d="M1.500 6l2.500-1.500 2 2.500C8.500 3.500 11 1.500 14.500 0 11.500 3.500 8.500 7.500 7 11.500H5.500C4.500 9.500 3 7.500 1.500 6z" fill="#008000" stroke="#004000" stroke-width="0.700"/></svg>
<svg style="left:32px;top:451px" width="15" height="14" viewBox="0 0 15 14"><rect x="3" y="12" width="10" height="1.500" fill="#808080"/><rect x="11" y="5" width="1.500" height="8" fill="#808080"/><rect x="0.500" y="1" width="10" height="11" fill="#ffff55"/><path d="M1 0.500v11.500M10 3v9" fill="none" stroke="#0000c0" stroke-width="1.200"/><path d="M1.500 6l2.500-1.500 2 2.500C8.500 3.500 11 1.500 14.500 0 11.500 3.500 8.500 7.500 7 11.500H5.500C4.500 9.500 3 7.500 1.500 6z" fill="#008000" stroke="#004000" stroke-width="0.700"/></svg>
<span id="t88" class="t" style="left:72.00px;top:432px;font-size:12px;line-height:14px;transform:scaleX(0.8983);clip-path:inset(0 2.2% 0 0);">0008534-25.2022.8.24</span>
<span id="t89" class="t" style="left:72.00px;top:450px;font-size:12px;line-height:14px;transform:scaleX(0.8793);">354222-2009.0</span>
<span id="t90" class="t" style="left:181.30px;top:450px;font-size:12px;line-height:14px;transform:scaleX(0.9424);">VER PAR.DIA 12/11/09</span>
<span id="t91" class="t" style="left:503.00px;top:432px;font-size:12px;line-height:14px;transform:scaleX(0.9573);">23/02/2022</span>
<span id="t92" class="t" style="left:707.50px;top:432px;font-size:12px;line-height:14px;transform:scaleX(0.9573);">23/02/2022</span>
<span id="t93" class="t" style="left:707.50px;top:450px;font-size:12px;line-height:14px;transform:scaleX(0.9717);">12/11/2009</span>
<div class="track" style="left:806px;top:412px;width:16px;height:67px;"></div>
<div class="sbtn" style="left:806px;top:412px;width:16px;height:16px;"></div>
<svg style="left:810px;top:418px" width="7" height="4" viewBox="0 0 7 4"><path d="M0 4L3.500 0 7 4z" fill="#000"/></svg>
<div class="sbtn" style="left:806px;top:428px;width:16px;height:15px;"></div>
<div class="sbtn" style="left:806px;top:463px;width:16px;height:16px;"></div>
<svg style="left:810px;top:469px" width="7" height="4" viewBox="0 0 7 4"><path d="M0 0h7L3.500 4z" fill="#000"/></svg>
<div class="track" style="left:9px;top:479px;width:797px;height:16px;"></div>
<div class="sbtn" style="left:9px;top:479px;width:16px;height:16px;"></div>
<svg style="left:14px;top:483px" width="4" height="7" viewBox="0 0 4 7"><path d="M4 0v7L0 3.500z" fill="#000"/></svg>
<div class="sbtn" style="left:25px;top:479px;width:16px;height:16px;"></div>
<div class="sbtn" style="left:790px;top:479px;width:16px;height:16px;"></div>
<svg style="left:796px;top:483px" width="4" height="7" viewBox="0 0 4 7"><path d="M0 0v7L4 3.500z" fill="#000"/></svg>
<div class="" style="left:806px;top:479px;width:16px;height:16px;background:#d4d0c8;"></div>
<div class="etch" style="left:7px;top:502px;width:817px;height:32px;"></div>
<span id="t94" class="t" style="left:16.70px;top:513px;font-size:12px;line-height:14px;font-weight:bold;font-family:'DejaVu Sans','Liberation Sans',sans-serif;transform:scaleX(0.8728);">CID 10</span>
<div class="sunk" style="left:63px;top:508px;width:377px;height:21px;"></div>
<span id="t95" class="t" style="left:69.00px;top:512.5px;font-size:12px;line-height:14px;transform:scaleX(0.8808);">Escolha a CID para adicionar ao processo</span>
<div class="sbtn" style="left:422px;top:510px;width:16px;height:17px;"></div>
<svg style="left:426px;top:516px" width="7" height="4" viewBox="0 0 7 4"><path d="M0 0h7L3.500 4z" fill="#000"/></svg>
<div class="sunk" style="left:447px;top:513px;width:13px;height:13px;"></div>
<span id="t96" class="t" style="left:465.00px;top:512px;font-size:12px;line-height:14px;transform:scaleX(0.8993);">Acidente de Trabalho</span>
<div class="btn" style="left:643px;top:508px;width:169px;height:22px;"></div>
<span id="t97" class="t" style="left:685.00px;top:512px;font-size:12px;line-height:14px;transform:scaleX(0.8645);">Adicionar CID</span>
<svg style="left:756px;top:511px" width="11" height="16" viewBox="0 0 11 16"><path d="M4 0h3v8.500h3.500L5.500 16 0.500 8.500H4z" fill="#e80000" stroke="#700000" stroke-width="0.600"/></svg>
<div class="sunk" style="left:7px;top:534px;width:817px;height:79px;"></div>
<div class="hd" style="left:9px;top:536px;width:12px;height:18px;"></div>
<div class="hd" style="left:21px;top:536px;width:112px;height:18px;"></div>
<div class="hd" style="left:133px;top:536px;width:572px;height:18px;"></div>
<div class="hd" style="left:705px;top:536px;width:101px;height:18px;"></div>
<span id="t98" class="t" style="left:24.00px;top:538px;font-size:12px;line-height:14px;transform:scaleX(0.8383);">Código CID</span>
<span id="t99" class="t" style="left:135.50px;top:538px;font-size:12px;line-height:14px;transform:scaleX(0.8252);">Cid's</span>
<span id="t100" class="t" style="left:711.50px;top:538px;font-size:12px;line-height:14px;transform:scaleX(0.9097);">Acidente Trabalho</span>
<div class="hd" style="left:9px;top:554px;width:12px;height:18px;"></div>
<div class="" style="left:21px;top:554px;width:112px;height:18px;background:#fff;border-right:1px solid #c0c0c0;border-bottom:1px solid #c0c0c0;"></div>
<div class="" style="left:133px;top:554px;width:572px;height:18px;background:#fff;border-right:1px solid #c0c0c0;border-bottom:1px solid #c0c0c0;"></div>
<div class="" style="left:705px;top:554px;width:101px;height:18px;background:#fff;border-right:1px solid #c0c0c0;border-bottom:1px solid #c0c0c0;"></div>
<div class="hd" style="left:9px;top:572px;width:12px;height:18px;"></div>
<div class="" style="left:21px;top:572px;width:112px;height:18px;background:#fff;border-right:1px solid #c0c0c0;border-bottom:1px solid #c0c0c0;"></div>
<div class="" style="left:133px;top:572px;width:572px;height:18px;background:#fff;border-right:1px solid #c0c0c0;border-bottom:1px solid #c0c0c0;"></div>
<div class="" style="left:705px;top:572px;width:101px;height:18px;background:#fff;border-right:1px solid #c0c0c0;border-bottom:1px solid #c0c0c0;"></div>
<div class="" style="left:9px;top:590px;width:797px;height:5px;background:#fff;"></div>
<svg style="left:12px;top:557px" width="6" height="11" viewBox="0 0 6 11"><path d="M0 0v11L6 5.500z" fill="#000"/></svg>
<span id="t101" class="t" style="left:24.00px;top:556px;font-size:12px;line-height:14px;transform:scaleX(0.8868);">Q74.2</span>
<span id="t102" class="t" style="left:24.00px;top:574px;font-size:12px;line-height:14px;transform:scaleX(0.8693);">M51.1</span>
<span id="t103" class="t" style="left:135.50px;top:556px;font-size:12px;line-height:14px;transform:scaleX(0.8698);">Outr malform cong membros inf incl cint pelv</span>
<span id="t104" class="t" style="left:135.50px;top:574px;font-size:12px;line-height:14px;transform:scaleX(0.8768);">Transt disco lombar outr intervert radiculop</span>
<svg style="left:755px;top:555px" width="16" height="16" viewBox="0 0 16 16"><rect x="4" y="4" width="8" height="9" fill="#fff"/><path d="M12.500 4v9.500H4" fill="none" stroke="#808080"/><path d="M8 2v3M10 2v3M8 3.500h3M11 5.500h1" stroke="#000" fill="none"/><path d="M5 8.500h6M4 11.500h7" stroke="#0000ff"/><path d="M5 5.500h2M6 13.500h2M11 9.500h1" stroke="#ffff00"/><path d="M1 2l11 11" stroke="#ff0000" stroke-width="2"/><path d="M2 14L11 4" stroke="#ff0000" stroke-width="1.600"/><path d="M11 4l4-3.500M12 13l3 2.500" stroke="#ff0000" stroke-width="1" stroke-dasharray="1.500 1"/></svg>
<svg style="left:755px;top:573px" width="16" height="16" viewBox="0 0 16 16"><rect x="4" y="4" width="8" height="9" fill="#fff"/><path d="M12.500 4v9.500H4" fill="none" stroke="#808080"/><path d="M8 2v3M10 2v3M8 3.500h3M11 5.500h1" stroke="#000" fill="none"/><path d="M5 8.500h6M4 11.500h7" stroke="#0000ff"/><path d="M5 5.500h2M6 13.500h2M11 9.500h1" stroke="#ffff00"/><path d="M1 2l11 11" stroke="#ff0000" stroke-width="2"/><path d="M2 14L11 4" stroke="#ff0000" stroke-width="1.600"/><path d="M11 4l4-3.500M12 13l3 2.500" stroke="#ff0000" stroke-width="1" stroke-dasharray="1.500 1"/></svg>
<div class="track" style="left:806px;top:536px;width:16px;height:59px;"></div>
<div class="sbtn" style="left:806px;top:536px;width:16px;height:16px;"></div>
<svg style="left:810px;top:542px" width="7" height="4" viewBox="0 0 7 4"><path d="M0 4L3.500 0 7 4z" fill="#000"/></svg>
<div class="sbtn" style="left:806px;top:552px;width:16px;height:15px;"></div>
<div class="sbtn" style="left:806px;top:579px;width:16px;height:16px;"></div>
<svg style="left:810px;top:585px" width="7" height="4" viewBox="0 0 7 4"><path d="M0 0h7L3.500 4z" fill="#000"/></svg>
<div class="track" style="left:9px;top:595px;width:797px;height:16px;"></div>
<div class="sbtn" style="left:9px;top:595px;width:16px;height:16px;"></div>
<svg style="left:14px;top:599px" width="4" height="7" viewBox="0 0 4 7"><path d="M4 0v7L0 3.500z" fill="#000"/></svg>
<div class="sbtn" style="left:25px;top:595px;width:16px;height:16px;"></div>
<div class="sbtn" style="left:790px;top:595px;width:16px;height:16px;"></div>
<svg style="left:796px;top:599px" width="4" height="7" viewBox="0 0 4 7"><path d="M0 0v7L4 3.500z" fill="#000"/></svg>
<div class="" style="left:806px;top:595px;width:16px;height:16px;background:#d4d0c8;"></div>
<div class="low1" style="left:7px;top:615px;width:302px;height:17px;"></div>
<div class="low1" style="left:310px;top:615px;width:514px;height:17px;"></div>
<span id="t105" class="t" style="left:311.00px;top:617px;font-size:12px;line-height:14px;transform:scaleX(0.8780);">Usuário criou:</span>
<div class="blob" style="left:378px;top:616px;width:104px;height:15px;"></div>
<div class="blob" style="left:415px;top:619px;width:79px;height:15px;"></div>
<div class="" style="left:685px;top:269px;width:142px;height:69px;border:4px solid #ff0000;"></div>
</div>
</body>
</html>
